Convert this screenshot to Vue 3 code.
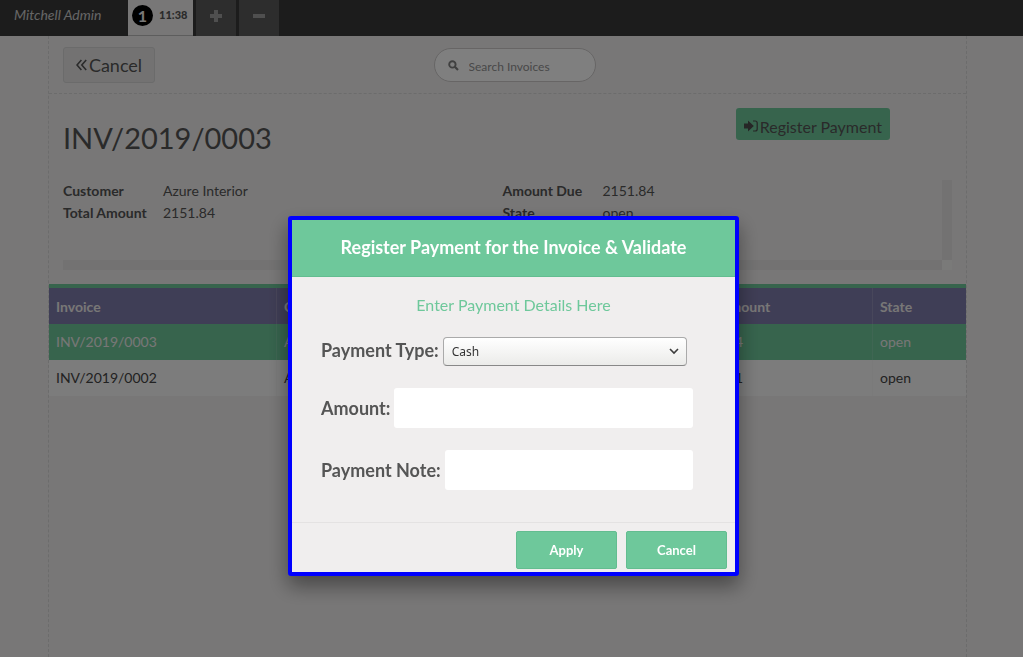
<script setup>
import { ref } from 'vue'

const search = ref('')
const paymentType = ref('Cash')
const amount = ref('')
const note = ref('')

const details = [
  [
    { label: 'Customer', value: 'Azure Interior' },
    { label: 'Total Amount', value: '2151.84' },
  ],
  [
    { label: 'Amount Due', value: '2151.84' },
    { label: 'State', value: 'open' },
  ],
]

const invoices = [
  { name: 'INV/2019/0003', customer: 'Azure Interior', total: '2151.84', due: '2151.84', state: 'open', selected: true },
  { name: 'INV/2019/0002', customer: 'Azure Interior', total: '3221.01', due: '3221.01', state: 'open', selected: false },
]
</script>

<template>
  <div class="pos">
    <header class="topbar">
      <span class="username">Mitchell Admin</span>
      <button class="order" type="button">
        <span class="badge">1</span>
        <span class="time">11:38</span>
      </button>
      <button class="square" type="button" aria-label="New order">
        <svg width="14" height="14" viewBox="0 0 14 14"><path d="M5 1h4v4h4v4H9v4H5V9H1V5h4z" fill="#9e9e9e" /></svg>
      </button>
      <button class="square" type="button" aria-label="Delete order">
        <svg width="14" height="14" viewBox="0 0 14 14"><path d="M1 5h12v4H1z" fill="#9e9e9e" /></svg>
      </button>
    </header>

    <main class="screen">
      <div class="toolbar">
        <div>
          <button class="back" type="button">
            <svg width="11" height="12" viewBox="0 0 11 12" fill="none" stroke="#555" stroke-width="1.6"><path d="M5.4 1 1 6l4.4 5M10.2 1 5.8 6l4.4 5" /></svg>
            <span>Cancel</span>
          </button>
        </div>
        <label class="search">
          <svg width="11" height="11" viewBox="0 0 11 11" fill="none" stroke="#808080"><circle cx="4.4" cy="4.4" r="3.2" stroke-width="1.9" /><path d="m6.8 6.8 3.2 3.2" stroke-width="2.2" /></svg>
          <input v-model="search" type="text" placeholder="Search Invoices" aria-label="Search Invoices" />
        </label>
      </div>

      <section class="summary">
        <div class="heading">
          <h1>INV/2019/0003</h1>
          <button class="register" type="button">
            <svg width="14" height="12" viewBox="0 0 14 12"><path d="M0 3.5h4V.5L9.8 6 4 11.5v-3H0z" fill="#4c4c4c" /><path d="M9 1h2.2a2 2 0 0 1 2 2v6a2 2 0 0 1-2 2H9" fill="none" stroke="#4c4c4c" stroke-width="1.2" /></svg>
            <span>Register Payment</span>
          </button>
        </div>
        <div class="details">
          <div class="fields">
            <dl v-for="(group, i) in details" :key="i">
              <div v-for="item in group" :key="item.label">
                <dt>{{ item.label }}</dt>
                <dd>{{ item.value }}</dd>
              </div>
            </dl>
          </div>
          <div class="track"></div>
          <div class="track"></div>
          <div class="corner"></div>
        </div>
      </section>

      <table class="list">
        <colgroup>
          <col class="c1" /><col class="c2" /><col class="c3" /><col class="c4" /><col class="c5" />
        </colgroup>
        <thead>
          <tr><th>Invoice</th><th>Customer</th><th>Total Amount</th><th>Due Amount</th><th>State</th></tr>
        </thead>
        <tbody>
          <tr v-for="inv in invoices" :key="inv.name" :class="{ selected: inv.selected }">
            <td>{{ inv.name }}</td><td>{{ inv.customer }}</td><td>{{ inv.total }}</td><td>{{ inv.due }}</td><td>{{ inv.state }}</td>
          </tr>
        </tbody>
      </table>
    </main>

    <div class="backdrop">
      <form class="popup" role="dialog" aria-labelledby="popup-title" @submit.prevent>
        <h2 id="popup-title">Register Payment for the Invoice &amp; Validate</h2>
        <div class="body">
          <p>Enter Payment Details Here</p>
          <div class="row type">
            <label for="ptype">Payment Type:</label>
            <span class="select">
              <select id="ptype" v-model="paymentType">
                <option>Cash</option>
                <option>Bank</option>
              </select>
              <svg width="10" height="7" viewBox="0 0 10 7" fill="none" stroke="#3c3c3c" stroke-width="1.6"><path d="m1 1 4 4 4-4" /></svg>
            </span>
          </div>
          <div class="row">
            <label for="amount">Amount:</label>
            <input id="amount" v-model="amount" type="text" />
          </div>
          <div class="row">
            <label for="note">Payment Note:</label>
            <input id="note" v-model="note" type="text" />
          </div>
        </div>
        <footer>
          <button type="submit">Apply</button>
          <button type="button">Cancel</button>
        </footer>
      </form>
    </div>
  </div>
</template>

<style>
body {
  background: #f0eeee;
}
</style>

<style scoped>
.pos,
.pos * {
  box-sizing: border-box;
}
.pos {
  min-height: 100vh;
  display: flex;
  flex-direction: column;
  font: 14px/22px Lato, "Liberation Sans", sans-serif;
  color: #555;
  background: #f0eeee;
}
button,
input {
  font-family: inherit;
  color: inherit;
}
button {
  border: 0;
  padding: 0;
  margin: 0;
}
svg {
  flex: none;
}

.topbar {
  display: flex;
  height: 36px;
  gap: 3px;
  background: #393939;
}
.username {
  width: 125px;
  padding: 4px 0 0 14px;
  font-style: italic;
  color: #ccc;
}
.order {
  width: 65px;
  display: flex;
  align-items: flex-start;
  gap: 6px;
  padding: 5px 4px;
  background: #f0eeee;
  border-bottom: 1px solid #bbb;
}
.badge {
  width: 21px;
  height: 21px;
  border-radius: 50%;
  background: #000;
  color: #f0eeee;
  font-size: 16px;
  font-weight: 700;
  line-height: 21px;
}
.time {
  font-size: 11px;
  font-weight: 900;
  line-height: 20px;
}
.square {
  width: 40px;
  padding-bottom: 5px;
  display: flex;
  align-items: center;
  justify-content: center;
  background: #5a5a5a;
}

.screen {
  flex: 1;
  margin: 0 56px 0 48px;
  border: dashed #d8d8d8;
  border-width: 0 1px;
}
.toolbar {
  display: grid;
  grid-template-columns: 1fr 162px 1fr;
  align-items: center;
  height: 58px;
  padding: 1px 0 0 14px;
  border-bottom: 1px dashed #d8d8d8;
}
.back {
  display: flex;
  align-items: center;
  justify-content: center;
  gap: 2px;
  width: 92px;
  height: 36px;
  border: 1px solid #d6d6d6;
  border-radius: 3px;
  background: #e6e5e5;
  font-size: 18px;
}
.search {
  display: flex;
  align-items: center;
  gap: 10px;
  height: 34px;
  padding: 0 13px;
  border: 1px solid #cecbcb;
  border-radius: 17px;
  background: #fff;
}
.search input {
  width: 100%;
  min-width: 0;
  border: 0;
  padding: 2px 0 0;
  font-size: 12px;
  background: none;
  outline: 0;
}
.search input::placeholder {
  color: #929292;
}

.summary {
  padding: 14px;
}
.heading {
  display: flex;
  justify-content: space-between;
  align-items: flex-start;
  height: 72px;
  padding-right: 62px;
}
h1 {
  margin: 9px 0 0;
  font-size: 29px;
  font-weight: 400;
  line-height: 42px;
}
.register {
  display: flex;
  align-items: center;
  gap: 2px;
  height: 32px;
  padding: 4px 8px 0;
  border-radius: 3px;
  background: #6ec89b;
  font-size: 16px;
}
.details {
  display: grid;
  grid-template-columns: 1fr 10px;
  grid-template-rows: 80px 10px;
}
.fields {
  display: grid;
  grid-template-columns: 1fr 1fr;
}
dl {
  margin: 0;
}
dl div {
  display: grid;
  grid-template-columns: 100px 1fr;
}
dt {
  font-weight: 700;
}
dd {
  margin: 0;
}
.track {
  background: #e6e5e5;
}
.corner {
  background: #f4f4f2;
}

.list {
  width: 100%;
  table-layout: fixed;
  border-collapse: separate;
  border-spacing: 0;
  border-top: 4px solid #6ec89b;
}
.c1 { width: 227px; }
.c2 { width: 204px; }
.c4 { width: 189px; }
.c5 { width: 94px; }
.list th,
.list td {
  height: 36px;
  padding: 0 7px;
  text-align: left;
  line-height: 20px;
}
.list th {
  padding-top: 2px;
  background: #7f7cac;
  color: #f0eeee;
  border-left: 1px solid #918eb6;
}
.list td {
  background: #f8f8f8;
  color: #444;
  border-left: 1px solid #f4f4f4;
}
.list .selected td {
  background: #6ec89b;
  color: #f0eeee;
  border-left-color: #7ecca6;
}
.list tr > :first-child {
  border-left: 0;
}

.backdrop {
  position: fixed;
  inset: 0;
  display: flex;
  justify-content: center;
  align-items: flex-start;
  padding: 216px 0 0 4px;
  background: rgba(0, 0, 0, 0.5);
}
.popup {
  width: 451px;
  max-width: 100%;
  border: 4px solid #00f;
  border-radius: 3px;
  background: #f0eeee;
  box-shadow: 0 10px 20px rgba(0, 0, 0, 0.4);
}
h2 {
  margin: 0;
  padding: 16px 0 18px;
  border-bottom: 1px solid #63bd90;
  background: #6ec89b;
  color: #fff;
  font-size: 18px;
  line-height: 22px;
  text-align: center;
}
.body {
  display: flex;
  flex-direction: column;
  gap: 22px;
  padding: 18px 42px 32px 29px;
}
.body p {
  margin: 0 -13px 0 0;
  font-size: 16px;
  line-height: 20px;
  text-align: center;
  color: #6ec89b;
}
.row {
  display: flex;
  align-items: center;
  gap: 4px;
}
.row label {
  font-size: 18px;
  font-weight: 700;
}
.row input {
  flex: 1;
  min-width: 0;
  height: 40px;
  border: 0;
  border-radius: 3px;
  background: #fff;
}
.type {
  align-items: flex-start;
  padding-right: 6px;
}
.type label {
  line-height: 26px;
}
.select {
  position: relative;
  flex: 1;
  display: flex;
}
.select select {
  appearance: none;
  width: 100%;
  height: 29px;
  padding: 0 8px;
  border: 1px solid #aaa;
  border-bottom-color: #888;
  border-radius: 4px;
  background: linear-gradient(#fff, #ebebe9);
  color: #333;
  font: 12px "Noto Sans", sans-serif;
}
.select svg {
  position: absolute;
  right: 8px;
  top: 11px;
  pointer-events: none;
}
footer {
  display: flex;
  justify-content: flex-end;
  gap: 9px;
  padding: 8px 8px 3px;
  border-top: 1px solid #e4e2e2;
}
footer button {
  width: 101px;
  height: 38px;
  border: 1px solid #63bd90;
  border-radius: 2px;
  background: #6ec89b;
  color: #fff;
  font-size: 13px;
  font-weight: 700;
}
</style>
